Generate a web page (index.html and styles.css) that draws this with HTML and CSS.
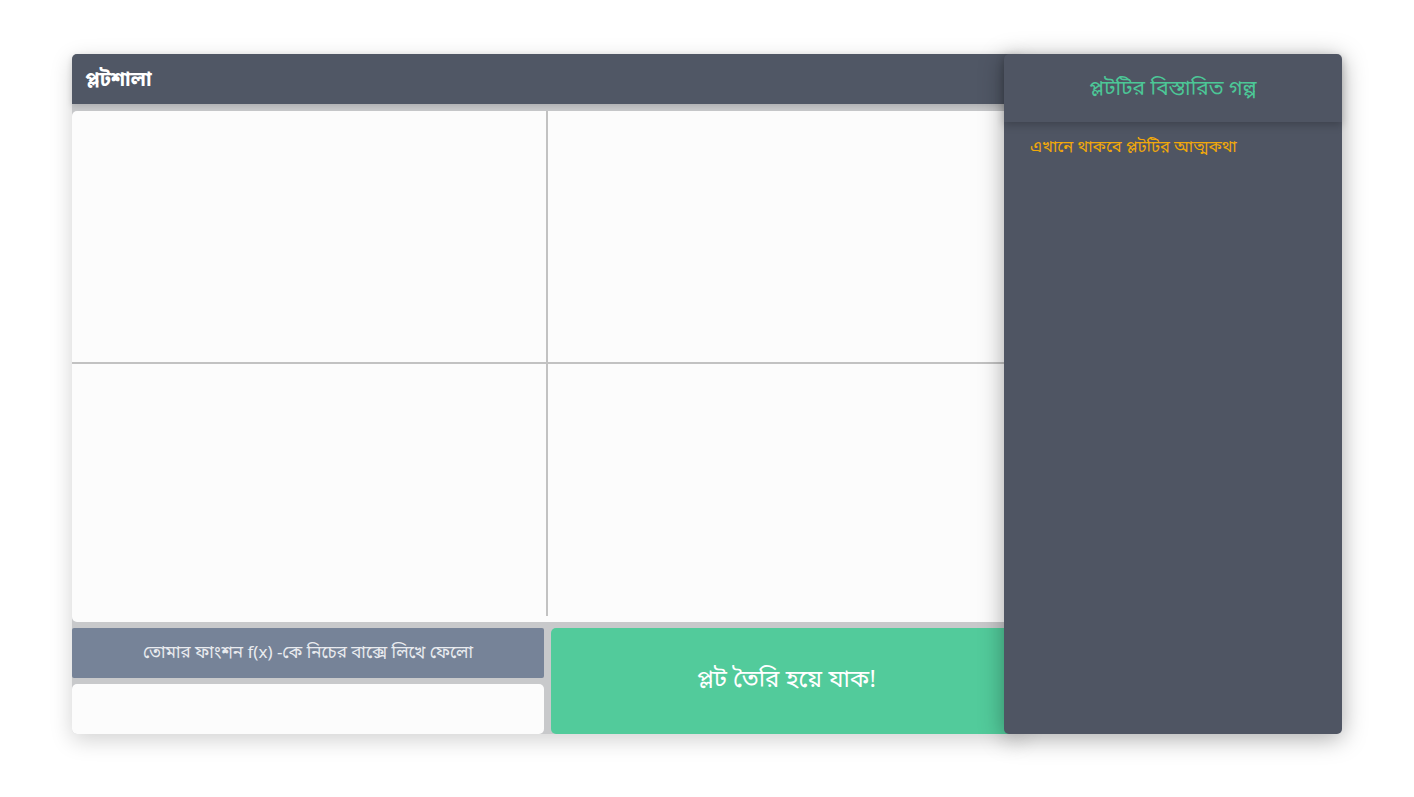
FILE: index.html
```html
<!DOCTYPE html>
<html lang="bn">
<head>
<meta charset="utf-8">
<title>প্লটশালা</title>
<link rel="stylesheet" href="styles.css">
</head>
<body>
<div class="app">
  <div class="main">
    <header class="topbar">প্লটশালা</header>
    <div class="plot">
      <svg class="axes" width="950" height="511" viewBox="0 0 950 511">
        <line x1="0" y1="252" x2="950" y2="252" stroke="#c2c2c2" stroke-width="2"/>
        <line x1="475" y1="0" x2="475" y2="505" stroke="#c2c2c2" stroke-width="2"/>
      </svg>
    </div>
    <div class="controls">
      <div class="inputcol">
        <div class="label">তোমার ফাংশন f(x) -কে নিচের বাক্সে লিখে ফেলো</div>
        <input class="fx" type="text">
      </div>
      <button class="go">প্লট তৈরি হয়ে যাক!</button>
    </div>
  </div>
  <aside class="drawer">
    <div class="drawer-head">প্লটটির বিস্তারিত গল্প</div>
    <div class="drawer-body">এখানে থাকবে প্লটটির আত্মকথা</div>
  </aside>
</div>
</body>
</html>
```

FILE: styles.css
```css
* { box-sizing: border-box; }
html, body { margin: 0; padding: 0; background: #ffffff; }
body {
  font-family: "Noto Sans Bengali", "Lohit Bengali", "Noto Sans", sans-serif;
  width: 1414px;
  height: 797px;
  overflow: hidden;
  padding-top: 54px;
}
.app {
  position: relative;
  width: 1270px;
  height: 680px;
  margin: 0 auto;
}
.main {
  width: 950px;
  height: 680px;
  display: grid;
  grid-template-rows: 50px 511px 106px;
  row-gap: 6.5px;
  background: #c8c9cb;
  border-radius: 5px;
  box-shadow: 0 6px 22px rgba(0,0,0,0.18);
}
.topbar {
  background: #505765;
  color: #ffffff;
  font-weight: bold;
  font-size: 20px;
  line-height: 50px;
  padding-top: 2px;
  padding-left: 13px;
  border-radius: 5px 5px 0 0;
  box-shadow: 0 2px 6px rgba(0,0,0,0.15);
}
.plot {
  background: #fcfcfc;
  border-radius: 5px;
  overflow: hidden;
}
.axes { display: block; }
.controls {
  display: grid;
  grid-template-columns: 472px 471px;
  column-gap: 7px;
}
.inputcol {
  display: grid;
  grid-template-rows: 50px 50px;
  row-gap: 6px;
}
.label {
  background: #768398;
  color: #e9ebef;
  font-size: 17px;
  display: flex;
  align-items: center;
  justify-content: center;
  border-radius: 2px;
}
.fx {
  border: none;
  background: #fcfcfc;
  border-radius: 5px;
  outline: none;
  width: 100%;
  height: 50px;
}
.go {
  border: none;
  background: #52cb9b;
  color: #ffffff;
  font-family: inherit;
  font-size: 24px;
  border-radius: 5px;
  cursor: pointer;
}
.drawer {
  position: absolute;
  top: 0;
  right: 0;
  width: 338px;
  height: 680px;
  background: #4f5563;
  border-radius: 5px;
  box-shadow: 0 4px 24px rgba(0,0,0,0.35);
}
.drawer-head {
  height: 68px;
  display: flex;
  align-items: center;
  justify-content: center;
  padding-top: 4px;
  color: #4cc797;
  font-size: 21px;
  border-radius: 5px 5px 0 0;
  box-shadow: 0 3px 8px rgba(0,0,0,0.22);
}
.drawer-body {
  padding: 15px 26px;
  color: #f1a80a;
  font-size: 16.5px;
}
```
